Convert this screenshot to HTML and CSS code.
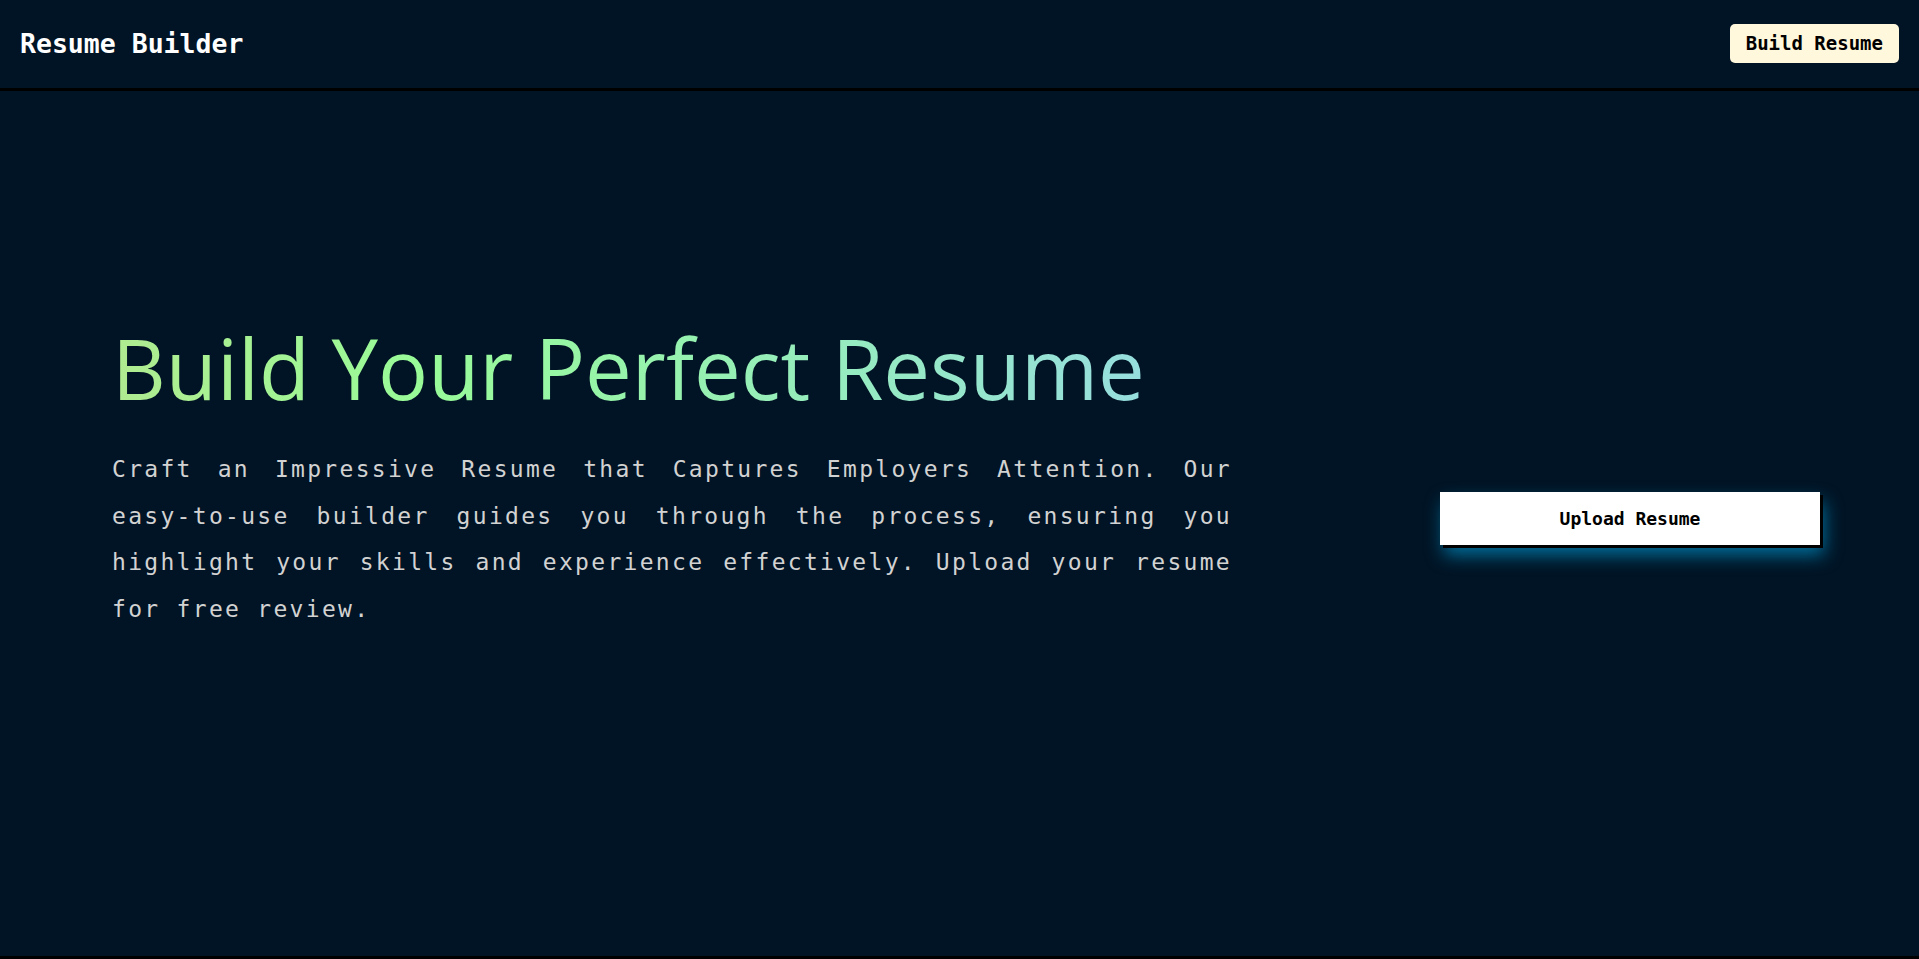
FILE: index.html
```html
<!DOCTYPE html>
<html lang="en">
<head>
<meta charset="utf-8">
<title>Resume Builder</title>
<link rel="stylesheet" href="styles.css">
</head>
<body>
<header class="topbar">
  <div class="brand">Resume Builder</div>
  <button class="build-btn" type="button">Build Resume</button>
</header>
<main class="hero">
  <section class="hero-copy">
    <h1 class="hero-title">Build Your Perfect Resume</h1>
    <p class="hero-text">Craft an Impressive Resume that Captures Employers Attention. Our easy-to-use builder guides you through the process, ensuring you highlight your skills and experience effectively. Upload your resume for free review.</p>
  </section>
  <button class="upload-btn" type="button">Upload Resume</button>
</main>
<footer class="bottom-rule"></footer>
</body>
</html>
```
FILE: styles.css
```css
* { box-sizing: border-box; }

html, body {
  margin: 0;
  padding: 0;
  background: #011425;
}

body {
  font-family: "DejaVu Sans Mono", "Liberation Mono", monospace;
  color: #d0d0d0;
  overflow: hidden;
}

.topbar {
  height: 91px;
  display: flex;
  align-items: center;
  justify-content: space-between;
  padding: 0 20px 3px 20px;
  border-bottom: 3px solid #000;
}

.brand {
  font-family: "DejaVu Sans Mono", monospace;
  font-weight: 700;
  font-size: 26.5px;
  color: #ffffff;
  margin-top: 1px;
}

.build-btn {
  height: 39px;
  padding: 0 16px;
  border: none;
  border-radius: 5px;
  background: #fff8dc;
  color: #000;
  font-family: "DejaVu Sans Mono", monospace;
  font-weight: 700;
  font-size: 19px;
  margin-top: 1px;
}

.hero {
  height: 865px;
  display: flex;
  align-items: center;
  justify-content: space-between;
  padding: 0 99px 10px 112px;
}

.hero-copy {
  width: 1120px;
  padding-bottom: 87px;
}

.hero-title {
  margin: 0 0 28px 0;
  font-family: "Open Sans", "Noto Sans", sans-serif;
  font-weight: 500;
  font-size: 83.3px;
  line-height: 100px;
  background: linear-gradient(90deg, #b0eb90 0%, #98fb98 30%, #96f0b4 60%, #96dede 100%);
  -webkit-background-clip: text;
  background-clip: text;
  color: transparent;
  width: max-content;
}

.hero-text {
  margin: 0;
  font-size: 23px;
  letter-spacing: 2.3px;
  line-height: 46.5px;
  text-align: justify;
  color: #d2d2d2;
}

.upload-btn {
  width: 380px;
  height: 53px;
  border: none;
  background: #ffffff;
  color: #000;
  font-family: "DejaVu Sans Mono", monospace;
  font-weight: 700;
  font-size: 18px;
  box-shadow: 3px 3px 0 #000, 4px 10px 18px rgba(0, 160, 220, 0.65);
}

.bottom-rule {
  border-top: 3px solid #000;
}
```
